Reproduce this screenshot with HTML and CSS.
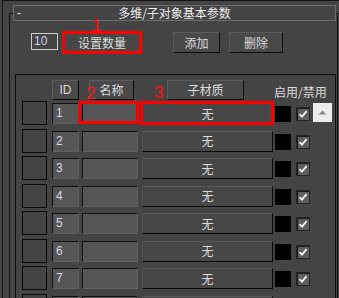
FILE: index.html
```html
<!DOCTYPE html>
<html lang="zh-CN">
<head>
    <meta charset="UTF-8">
    <title>多维/子对象基本参数</title>
    <link rel="stylesheet" href="styles.css">
</head>
<body>
    <div class="frame">
        <div class="rollout">
            <div class="rollout-title">
                <span class="collapse">-</span>
                <span class="title-text">多维/子对象基本参数</span>
            </div>
            <div class="mark mark-1">1</div>

            <div class="top-row">
                <div class="count-field">10</div>
                <div class="btn btn-count red-box">设置数量</div>
                <div class="btn btn-add">添加</div>
                <div class="btn btn-del">删除</div>
            </div>

            <div class="group">
                <div class="mark mark-2">2</div>
                <div class="mark mark-3">3</div>
                <div class="red-frame red-frame-2"></div>
                <div class="red-frame red-frame-3"></div>

                <div class="head-row">
                    <div class="btn head-id">ID</div>
                    <div class="btn head-name">名称</div>
                    <div class="btn head-mat">子材质</div>
                    <div class="head-toggle">启用/禁用</div>
                </div>

                <div class="rows" id="rows"></div>
            </div>
        </div>
    </div>

    <script>
        const rows = document.getElementById('rows');
        const check = '<svg width="14" height="14" viewBox="0 0 14 14"><rect x="0.5" y="0.5" width="13" height="13" fill="#5e5e5e" stroke="#262626"/><path d="M1 1H13V2H2V13H1Z" fill="#1c1c1c"/><path d="M3.5 7.2L6 9.6L10.6 4.2" fill="none" stroke="#f2f2f2" stroke-width="1.8"/></svg>';

        // 8th row is only peeking in at the bottom edge, so it has no labels
        for (let i = 1; i <= 8; i++) {
            const last = i === 8;
            const row = document.createElement('div');
            row.className = 'mat-row';
            row.innerHTML = `
                <div class="slot"></div>
                <div class="field id-field">${last ? '' : i}</div>
                <div class="field name-field"></div>
                <div class="btn mat-btn">${last ? '' : '无'}</div>
                <div class="swatch"></div>
                <div class="check">${check}</div>
                ${i === 1 ? '<div class="scroll-up"><svg width="9" height="5" viewBox="0 0 9 5"><path d="M0.5 4.5L4.5 0.5L8.5 4.5Z" fill="#8a8a8a"/></svg></div>' : ''}
            `;
            rows.appendChild(row);
        }
    </script>
</body>
</html>
```

FILE: styles.css
```css
body {
    margin: 0;
    width: 339px;
    height: 298px;
    overflow: hidden;
    background: #444444;
    color: #dcdcdc;
    font-family: "Noto Sans CJK SC", "Liberation Sans", sans-serif;
    font-size: 12px;
}

.frame {
    margin-left: 2px;
    height: 298px;
    box-sizing: border-box;
    overflow: hidden;
    border-left: 1px solid #141414;
    border-top: 1px solid #141414;
    padding: 12px 0 0 6px;
}

.rollout {
    position: relative;
    width: 329px;
    height: 286px;
    box-sizing: border-box;
    overflow: hidden;
    border: 1px solid #101010;
    border-bottom: none;
}

.rollout-title {
    display: flex;
    align-items: center;
    height: 16px;
    box-sizing: border-box;
    margin: -9px 1px 0 3px;
    border: 1px solid #6c6c6c;
    background: #444444;
    color: #eeeeee;
    line-height: 14px;
}

.rollout {
    overflow: visible;
}

.collapse {
    width: 0;
    margin-left: 3px;
    overflow: visible;
    font-family: "Liberation Sans", sans-serif;
}

.title-text {
    flex: 1;
    text-align: center;
    margin-right: 3px;
}

.top-row {
    display: flex;
    align-items: flex-start;
    margin: 10px 0 0 21px;
    height: 23px;
}

.count-field {
    width: 27px;
    height: 17px;
    box-sizing: border-box;
    margin-top: 2px;
    border: 1px solid #cccccc;
    padding-left: 2px;
    line-height: 15px;
    color: #c8d6ee;
    font-family: "Liberation Sans", sans-serif;
}

.btn {
    display: flex;
    align-items: center;
    justify-content: center;
    box-sizing: border-box;
    background: #494949;
    border: 1px solid;
    border-color: #5c5c5c #0c0c0c #0c0c0c #5c5c5c;
    color: #dcdcdc;
    line-height: 14px;
}

.btn-count {
    width: 80px;
    height: 23px;
    margin-left: 4px;
}

.red-box {
    border: 3px solid #ff0000;
    background: #474747;
}

.btn-add {
    width: 47px;
    height: 21px;
    margin: 1px 0 0 31px;
}

.btn-del {
    width: 54px;
    height: 21px;
    margin: 1px 0 0 9px;
}

.group {
    position: relative;
    width: 321px;
    height: 224px;
    box-sizing: border-box;
    overflow: hidden;
    margin: 20px 0 0 5px;
    border: 1px solid #0e0e0e;
    border-bottom: none;
    padding-top: 5px;
}

.head-row {
    display: flex;
    align-items: flex-start;
    height: 20px;
}

.head-id {
    width: 27px;
    height: 20px;
    margin-left: 36px;
    font-family: "Liberation Sans", sans-serif;
}

.head-name {
    width: 45px;
    height: 20px;
    margin-left: 10px;
}

.head-mat {
    width: 77px;
    height: 20px;
    margin-left: 33px;
}

.head-toggle {
    margin: 5px 0 0 30px;
    line-height: 14px;
    white-space: nowrap;
}

.rows {
    margin-top: 1px;
}

.mat-row {
    display: flex;
    align-items: flex-start;
    height: 27.57px;
    padding-left: 6px;
}

.slot {
    width: 25px;
    height: 24px;
    box-sizing: border-box;
    border: 1px solid #0a0a0a;
    margin-right: 5px;
}

.field {
    height: 21px;
    margin-top: 2px;
    box-sizing: border-box;
    background: #565656;
    border: 1px solid;
    border-color: #101010 #606060 #606060 #101010;
}

.id-field {
    width: 27px;
    margin-right: 3px;
    padding-left: 3px;
    line-height: 19px;
    color: #d4dcea;
    font-family: "Liberation Sans", sans-serif;
}

.name-field {
    width: 56px;
    margin-right: 4px;
}

.mat-btn {
    width: 131px;
    height: 21px;
    margin: 2px 2px 0 0;
    background: #474747;
    border-color: #595959 #080808 #080808 #4c4c4c;
}

.swatch {
    width: 16px;
    height: 16px;
    margin: 5px 5px 0 0;
    background: #000000;
}

.check {
    width: 14px;
    height: 14px;
    margin: 6px 3px 0 0;
}

.check svg {
    display: block;
}

.scroll-up {
    display: flex;
    align-items: center;
    justify-content: center;
    width: 19px;
    height: 19px;
    margin-top: 2px;
    background: #ececec;
}

.mark {
    position: absolute;
    color: #ff1010;
    font-family: "Liberation Sans", sans-serif;
    font-size: 17px;
    line-height: 17px;
}

.mark-1 {
    left: 82px;
    top: 3px;
}

.mark-2 {
    left: 70px;
    top: 10px;
}

.mark-3 {
    left: 138px;
    top: 9px;
}

.red-frame {
    position: absolute;
    box-sizing: border-box;
    border: 3px solid #ff0000;
}

.red-frame-2 {
    left: 62px;
    top: 26px;
    width: 61px;
    height: 23px;
}

.red-frame-3 {
    left: 124px;
    top: 26px;
    width: 134px;
    height: 24px;
}
```
